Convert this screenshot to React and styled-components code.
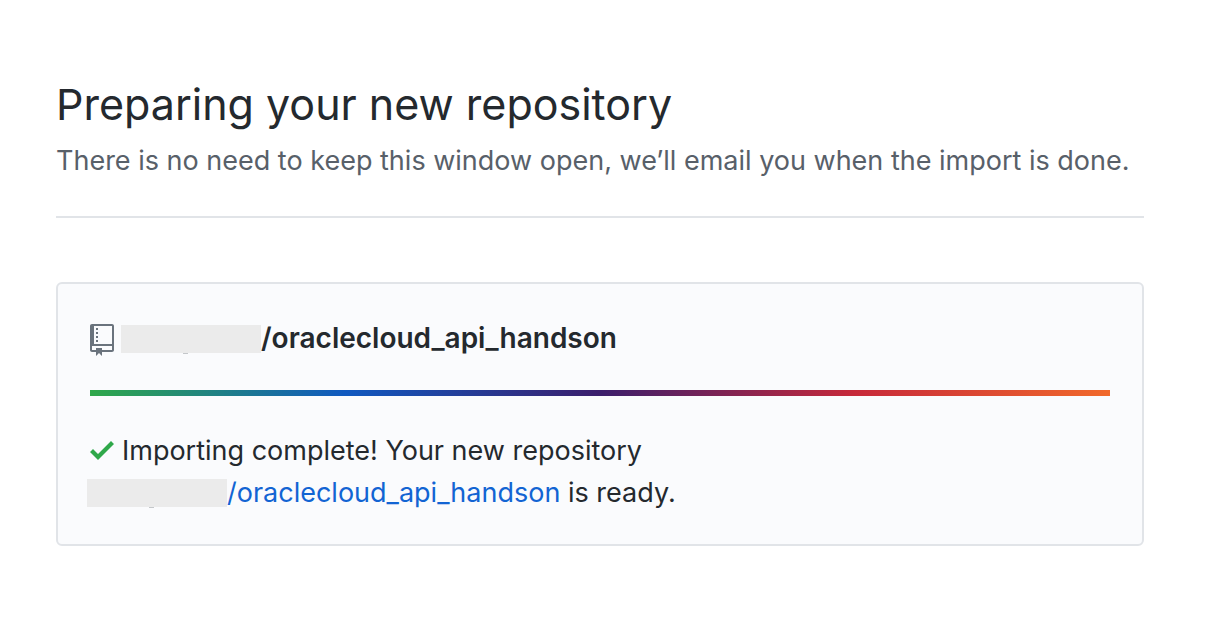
import React from "react";
import styled, { createGlobalStyle } from "styled-components";

const GlobalStyle = createGlobalStyle`
  * { box-sizing: border-box; }
  body {
    margin: 0;
    background: #fff;
    color: #24292e;
    font-family: Inter, "Liberation Sans", sans-serif;
    font-size: 27px;
    font-weight: 400;
    line-height: 42px;
  }
`;

const Page = styled.main`
  padding: 72px 64px 64px 56px;
`;

const Header = styled.header`
  padding-bottom: 34px;
  border-bottom: 2px solid #e1e4e8;
`;

const Title = styled.h1`
  margin: 0;
  font-size: 43px;
  line-height: 64px;
  font-weight: 400;
`;

const Lead = styled.p`
  margin: 0;
  padding-top: 4px;
  color: #586069;
`;

const Card = styled.section`
  margin-top: 64px;
  padding: 33px 32px 30px;
  border: 2px solid #e1e4e8;
  border-radius: 6px;
  background: #fafbfd;
`;

const RepoName = styled.h2`
  margin: 0;
  font-size: 28px;
  line-height: 42px;
  font-weight: 600;
`;

const Icon = styled.svg`
  width: 24px;
  height: 32px;
  margin-right: 8px;
  vertical-align: -6px;
  fill: ${({ $color }) => $color};
`;

const RepoIcon = styled(Icon)`
  margin-right: 10px;
  vertical-align: -8px;
`;

const Owner = styled.span`
  position: relative;
  display: inline-block;
  width: 140px;
  height: 28px;
  margin-left: -3px;
  background: #ebebeb;
  vertical-align: -5px;

  &::after {
    content: "";
    position: absolute;
    top: 28px;
    left: 62px;
    width: 5px;
    height: 1px;
    background: #c4c7ca;
  }
`;

const Progress = styled.div`
  height: 6px;
  margin: 31px 0 34px;
  background: linear-gradient(to right, #2fa84a, #1059c0, #3b1e6c, #c7293a, #f1692b);
`;

const Status = styled.p`
  margin: 0;
`;

const RepoLink = styled.a`
  color: #1264d3;
  text-decoration: none;
`;

export default function App() {
  return (
    <>
      <GlobalStyle />
      <Page>
        <Header>
          <Title>Preparing your new repository</Title>
          <Lead>There is no need to keep this window open, we’ll email you when the import is done.</Lead>
        </Header>
        <Card>
          <RepoName>
            <RepoIcon $color="#6a737d" viewBox="0 0 12 16" aria-hidden="true">
              <path fillRule="evenodd" d="M4 9H3V8h1v1zm0-3H3v1h1V6zm0-2H3v1h1V4zm0-2H3v1h1V2zm8-1v12c0 .55-.45 1-1 1H6v2l-1.5-1.5L3 16v-2H1c-.55 0-1-.45-1-1V1c0-.55.45-1 1-1h10c.55 0 1 .45 1 1zm-1 10H1v2h2v-1h3v1h5v-2zm0-10H2v9h9V1z" />
            </RepoIcon>
            <Owner />
            /oraclecloud_api_handson
          </RepoName>
          <Progress role="progressbar" aria-label="Import progress" aria-valuenow={100} />
          <Status>
            <Icon $color="#2fa84a" viewBox="0 0 12 16" aria-hidden="true">
              <path fillRule="evenodd" d="M12 5l-8 8-4-4 1.5-1.5L4 10l6.5-6.5L12 5z" />
            </Icon>
            Importing complete! Your new repository
            <br />
            <RepoLink href="#repository"><Owner />/oraclecloud_api_handson</RepoLink> is ready.
          </Status>
        </Card>
      </Page>
    </>
  );
}
